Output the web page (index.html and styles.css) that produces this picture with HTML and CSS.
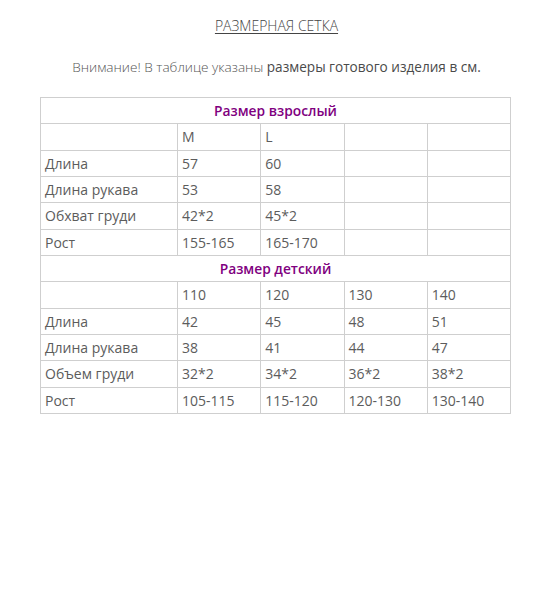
FILE: index.html
```html
<!DOCTYPE html>
<html lang="ru">
<head>
<meta charset="utf-8">
<link rel="stylesheet" href="styles.css">
</head>
<body>
<div class="page">
  <h2 class="title">РАЗМЕРНАЯ СЕТКА</h2>
  <p class="note">Внимание! В таблице указаны <span class="strong">размеры готового изделия в см.</span></p>
  <table class="sizes">
    <colgroup>
      <col class="c-label"><col class="c-val"><col class="c-val"><col class="c-val"><col class="c-val">
    </colgroup>
    <tr><td colspan="5" class="group">Размер взрослый</td></tr>
    <tr><td></td><td>M</td><td>L</td><td></td><td></td></tr>
    <tr><td>Длина</td><td>57</td><td>60</td><td></td><td></td></tr>
    <tr><td>Длина рукава</td><td>53</td><td>58</td><td></td><td></td></tr>
    <tr><td>Обхват груди</td><td>42*2</td><td>45*2</td><td></td><td></td></tr>
    <tr><td>Рост</td><td>155-165</td><td>165-170</td><td></td><td></td></tr>
    <tr><td colspan="5" class="group">Размер детский</td></tr>
    <tr><td></td><td>110</td><td>120</td><td>130</td><td>140</td></tr>
    <tr><td>Длина</td><td>42</td><td>45</td><td>48</td><td>51</td></tr>
    <tr><td>Длина рукава</td><td>38</td><td>41</td><td>44</td><td>47</td></tr>
    <tr><td>Объем груди</td><td>32*2</td><td>34*2</td><td>36*2</td><td>38*2</td></tr>
    <tr><td>Рост</td><td>105-115</td><td>115-120</td><td>120-130</td><td>130-140</td></tr>
  </table>
</div>
</body>
</html>
```
FILE: styles.css
```css
html, body {
  margin: 0;
  padding: 0;
  background: #fff;
}
body {
  font-family: "Open Sans", "Liberation Sans", sans-serif;
  color: #555;
}
.page {
  padding-top: 16px;
}
.title {
  margin: 0;
  text-align: center;
  font-size: 14px;
  font-weight: 300;
  line-height: 19px;
  color: #444;
  text-decoration: underline;
  text-underline-offset: 2px;
}
.note {
  margin: 22px 0 0;
  text-align: center;
  font-size: 13.6px;
  font-weight: 300;
  line-height: 19px;
  color: #555;
}
.note .strong {
  font-weight: 400;
  color: #4a4a4a;
}
.sizes {
  margin: 21px 0 0 40px;
  width: 470px;
  border-collapse: collapse;
  table-layout: fixed;
  font-size: 14px;
  color: #5c5c5c;
}
.c-label { width: 137px; }
.c-val { width: 83.25px; }
.sizes td {
  border: 1px solid #cfcfcf;
  padding: 3px 4px;
  line-height: 19.35px;
  height: 19.35px;
  text-align: left;
  vertical-align: middle;
}
.sizes td.group {
  text-align: center;
  font-weight: 600;
  font-size: 13.8px;
  color: #800080;
}
```
